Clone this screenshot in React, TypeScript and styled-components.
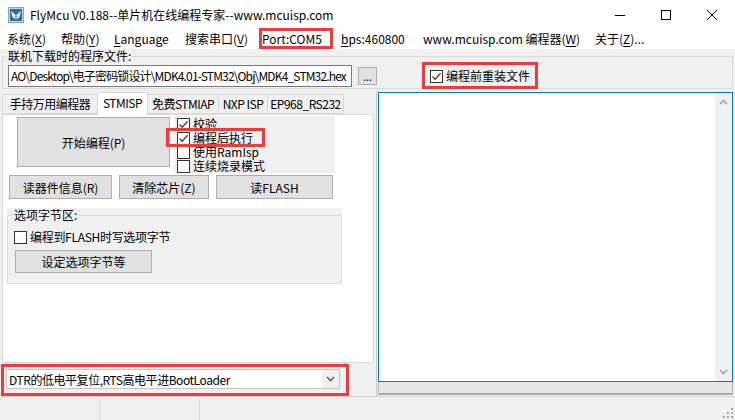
import React from 'react';
import styled, { createGlobalStyle } from 'styled-components';

const FONT = `"Noto Sans CJK SC", "Noto Sans", sans-serif`;

const Global = createGlobalStyle`
  html, body { margin: 0; padding: 0; background: #f0f0f0; }
  body { font-family: ${FONT}; font-size: 12px; color: #000; }
  #root { width: 735px; height: 420px; overflow: hidden; }
  * { box-sizing: border-box; }
`;

const Window = styled.div`
  position: relative;
  width: 735px;
  height: 420px;
  display: flex;
  flex-direction: column;
  background: #f0f0f0;
  font-family: ${FONT};
  font-size: 12px;
  overflow: hidden;
`;

const TitleBar = styled.div`
  height: 29px;
  flex: none;
  background: #fff;
  display: flex;
  align-items: center;
`;
const AppIcon = styled.svg`
  margin-left: 8px;
  flex: none;
`;
const TitleText = styled.span`
  margin-left: 6px;
  white-space: nowrap;
`;
const WinButtons = styled.div`
  margin-left: auto;
  display: flex;
  height: 100%;
`;
const WinButton = styled.div`
  width: 46px;
  display: flex;
  align-items: center;
  justify-content: center;
`;

const MenuBar = styled.div`
  height: 20px;
  flex: none;
  background: #fff;
  display: flex;
  align-items: center;
  white-space: nowrap;
`;
const MenuItem = styled.span<{ $w: number }>`
  width: ${p => p.$w}px;
  padding-left: 7px;
  line-height: 20px;
  flex: none;
`;
const Acc = styled.span`
  text-decoration: underline;
  text-underline-offset: 2px;
`;

const FileGroup = styled.fieldset`
  margin: 0 2px 2px 2px;
  padding: 2px 0 1px 5px;
  border: 1px solid #dcdcdc;
  flex: none;
  min-width: 0;
`;
const GroupLegend = styled.legend`
  padding: 0 1px;
  margin-left: -1px;
  line-height: 14px;
  font-size: 12px;
`;
const FileRow = styled.div`
  display: flex;
  align-items: center;
`;
const PathInput = styled.div`
  width: 344px;
  height: 22px;
  background: #fff;
  border: 1px solid #7a7a7a;
  padding-left: 2px;
  line-height: 20px;
  white-space: nowrap;
  overflow: hidden;
  letter-spacing: -0.85px;
`;
const SmallButton = styled.div`
  width: 19px;
  height: 18px;
  margin-left: 6px;
  background: #e1e1e1;
  border: 1px solid #adadad;
  display: flex;
  align-items: center;
  justify-content: center;
  line-height: 12px;
  font-size: 11px;
`;

const CheckRow = styled.label<{ $ml?: number; $h?: number }>`
  display: flex;
  align-items: center;
  margin-left: ${p => p.$ml ?? 0}px;
  height: ${p => p.$h ?? 14}px;
  white-space: nowrap;
  line-height: 14px;
`;
const Box = styled.span`
  width: 13px;
  height: 13px;
  flex: none;
  border: 1px solid #333;
  background: #fff;
  margin-right: 3px;
  display: flex;
  align-items: center;
  justify-content: center;
`;

const Main = styled.div`
  flex: 1;
  display: flex;
  min-height: 0;
`;
const LeftCol = styled.div`
  width: 376px;
  flex: none;
  display: flex;
  flex-direction: column;
  padding: 1px 0 0 2px;
`;
const TabStrip = styled.div`
  height: 22px;
  display: flex;
  align-items: flex-end;
  padding-left: 1px;
  position: relative;
  z-index: 1;
`;
const Tab = styled.div<{ $w: number; $active?: boolean }>`
  width: ${p => p.$w}px;
  height: ${p => (p.$active ? 23 : 20)}px;
  margin-bottom: ${p => (p.$active ? -1 : 0)}px;
  background: ${p => (p.$active ? '#fff' : '#f0f0f0')};
  border: 1px solid #d9d9d9;
  border-bottom: ${p => (p.$active ? 'none' : '1px solid #d9d9d9')};
  margin-left: -1px;
  display: flex;
  align-items: ${p => (p.$active ? 'flex-start' : 'center')};
  padding-top: ${p => (p.$active ? 2 : 0)}px;
  justify-content: center;
  white-space: nowrap;
  line-height: 16px;
  letter-spacing: -0.5px;
`;
const TabPanel = styled.div`
  width: 372px;
  height: 249px;
  background: #fff;
  border: 1px solid #d9d9d9;
  padding: 0 0 0 3px;
  display: flex;
  flex-direction: column;
`;
const TopRow = styled.div`
  display: flex;
  align-items: flex-start;
  margin-top: 1px;
  padding-left: 11px;
`;
const Button = styled.div<{ $w: number; $h: number }>`
  width: ${p => p.$w}px;
  height: ${p => p.$h}px;
  flex: none;
  background: #e1e1e1;
  border: 1px solid #adadad;
  display: flex;
  align-items: center;
  justify-content: center;
  white-space: nowrap;
`;
const BigButton = styled(Button)`
  margin-top: 1px;
`;
const CheckGroup = styled.div`
  margin-left: 4px;
  width: 161px;
  height: 57px;
  background: #f0f0f0;
  padding: 1px 0 0 3px;
  display: flex;
  flex-direction: column;
`;
const ButtonRow = styled.div`
  display: flex;
  gap: 7px;
  margin-top: 2px;
  padding-left: 3px;
`;
const OptionArea = styled.div`
  margin: 9px 0 0 1px;
  width: 335px;
  background: #f0f0f0;
`;
const OptionGroup = styled.fieldset`
  margin: 0;
  padding: 0 0 10px 6px;
  border: 1px solid #dcdcdc;
  min-width: 0;
`;
const OptionCheck = styled(CheckRow)`
  margin-top: 8px;
  letter-spacing: -0.3px;
`;
const OptionButton = styled(Button)`
  margin: 6px 0 0 1px;
`;

const Combo = styled.div`
  margin: 6px 0 0 4px;
  width: 334px;
  height: 20px;
  background: #fff;
  border: 1px solid #c4c4c4;
  display: flex;
  align-items: center;
`;
const ComboText = styled.span`
  flex: 1;
  padding-left: 2px;
  white-space: nowrap;
  overflow: hidden;
  letter-spacing: -0.45px;
`;
const ComboArrow = styled.span`
  width: 17px;
  height: 100%;
  background: #f0f0f0;
  display: flex;
  align-items: center;
  justify-content: center;
`;

const RightCol = styled.div`
  flex: 1;
  display: flex;
  flex-direction: column;
  border-left: 1px solid #c8c8c8;
  padding: 1px 2px 0 1px;
`;
const TextArea = styled.div`
  height: 290px;
  background: #fff;
  border: 1px solid #0078d7;
  display: flex;
`;
const TextContent = styled.div`
  flex: 1;
`;
const VScroll = styled.div`
  width: 17px;
  background: #f0f0f0;
  display: flex;
  flex-direction: column;
  justify-content: space-between;
  align-items: center;
  padding: 6px 0 6px 0;
`;
const HBar = styled.div`
  height: 13px;
  background: #e6e6e6;
  border-left: 1px solid #b4b4b4;
  border-right: 1px solid #b4b4b4;
  border-bottom: 2px solid #a8a8a8;
`;

const StatusBar = styled.div`
  height: 24px;
  flex: none;
  display: flex;
  border-top: 1px solid #d0d0d0;
  padding-top: 2px;
`;
const StatusCell = styled.div`
  width: 100px;
  border-right: 1px solid #d8d8d8;
`;
const Grip = styled.svg`
  margin: auto 2px 2px auto;
`;

const Highlight = styled.div<{ $x: number; $y: number; $w: number; $h: number }>`
  position: absolute;
  left: ${p => p.$x}px;
  top: ${p => p.$y}px;
  width: ${p => p.$w}px;
  height: ${p => p.$h}px;
  border: 3px solid #ef3b3b;
  pointer-events: none;
`;

const Check = ({ checked }: { checked?: boolean }) => (
  <Box>
    {checked && (
      <svg width="11" height="11" viewBox="0 0 11 11">
        <path d="M1.5 5.5 L4.2 8.2 L9.6 2.2" fill="none" stroke="#444" strokeWidth="1.3" />
      </svg>
    )}
  </Box>
);

const Chevron = ({ up, color = '#a6a6a6', w = 9 }: { up?: boolean; color?: string; w?: number }) => (
  <svg width={w} height="6" viewBox="0 0 9 6">
    <path d={up ? 'M1 5 L4.5 1.5 L8 5' : 'M1 1 L4.5 4.5 L8 1'} fill="none" stroke={color} strokeWidth="1.6" />
  </svg>
);

export default function App() {
  return (
    <Window>
      <Global />
      <TitleBar>
        <AppIcon width="16" height="16" viewBox="0 0 16 16">
          <rect x="0.5" y="0.5" width="15" height="15" fill="#c9d6e3" stroke="#8ea3b8" />
          <rect x="2" y="2" width="12" height="12" fill="#2a6db5" />
          <path d="M3 4 L8 8.5 L13 4 L11.5 10 L8 12.5 L4.5 10 Z" fill="#fff" />
          <path d="M8 8.5 L8 12" stroke="#2a6db5" strokeWidth="1" />
        </AppIcon>
        <TitleText>FlyMcu V0.188--单片机在线编程专家--www.mcuisp.com</TitleText>
        <WinButtons>
          <WinButton>
            <svg width="10" height="10" viewBox="0 0 10 10"><path d="M0 5.5 H10" stroke="#000" strokeWidth="1" /></svg>
          </WinButton>
          <WinButton>
            <svg width="10" height="10" viewBox="0 0 10 10"><rect x="0.5" y="0.5" width="9" height="9" fill="none" stroke="#000" /></svg>
          </WinButton>
          <WinButton>
            <svg width="10" height="10" viewBox="0 0 10 10"><path d="M0 0 L10 10 M10 0 L0 10" stroke="#000" strokeWidth="1" /></svg>
          </WinButton>
        </WinButtons>
      </TitleBar>

      <MenuBar>
        <MenuItem $w={54}>系统(<Acc>X</Acc>)</MenuItem>
        <MenuItem $w={53}>帮助(<Acc>Y</Acc>)</MenuItem>
        <MenuItem $w={71}><Acc>L</Acc>anguage</MenuItem>
        <MenuItem $w={77}>搜索串口(<Acc>V</Acc>)</MenuItem>
        <MenuItem $w={79}><Acc>P</Acc>ort:COM5</MenuItem>
        <MenuItem $w={82}><Acc>b</Acc>ps:460800</MenuItem>
        <MenuItem $w={172}>www.mcuisp.com 编程器(<Acc>W</Acc>)</MenuItem>
        <MenuItem $w={80}>关于(<Acc>Z</Acc>)...</MenuItem>
      </MenuBar>

      <FileGroup>
        <GroupLegend>联机下载时的程序文件:</GroupLegend>
        <FileRow>
          <PathInput>AO\Desktop\电子密码锁设计\MDK4.01-STM32\Obj\MDK4_STM32.hex</PathInput>
          <SmallButton>...</SmallButton>
          <CheckRow $ml={53} $h={16}>
            <Check checked />
            编程前重装文件
          </CheckRow>
        </FileRow>
      </FileGroup>

      <Main>
        <LeftCol>
          <TabStrip>
            <Tab $w={96}>手持万用编程器</Tab>
            <Tab $w={51} $active>STMISP</Tab>
            <Tab $w={72}>免费STMIAP</Tab>
            <Tab $w={50}>NXP ISP</Tab>
            <Tab $w={77}>EP968_RS232</Tab>
          </TabStrip>
          <TabPanel>
            <TopRow>
              <BigButton $w={153} $h={50}>开始编程(P)</BigButton>
              <CheckGroup>
                <CheckRow><Check checked />校验</CheckRow>
                <CheckRow><Check checked />编程后执行</CheckRow>
                <CheckRow><Check />使用RamIsp</CheckRow>
                <CheckRow><Check />连续烧录模式</CheckRow>
              </CheckGroup>
            </TopRow>
            <ButtonRow>
              <Button $w={103} $h={24}>读器件信息(R)</Button>
              <Button $w={90} $h={24}>清除芯片(Z)</Button>
              <Button $w={117} $h={24}>读FLASH</Button>
            </ButtonRow>
            <OptionArea>
              <OptionGroup>
                <GroupLegend>选项字节区:</GroupLegend>
                <OptionCheck><Check />编程到FLASH时写选项字节</OptionCheck>
                <OptionButton $w={137} $h={23}>设定选项字节等</OptionButton>
              </OptionGroup>
            </OptionArea>
          </TabPanel>
          <Combo>
            <ComboText>DTR的低电平复位,RTS高电平进BootLoader</ComboText>
            <ComboArrow><Chevron color="#606060" w={9} /></ComboArrow>
          </Combo>
        </LeftCol>
        <RightCol>
          <TextArea>
            <TextContent />
            <VScroll>
              <Chevron up />
              <Chevron />
            </VScroll>
          </TextArea>
          <HBar />
        </RightCol>
      </Main>

      <StatusBar>
        <StatusCell />
        <StatusCell />
        <Grip width="10" height="10" viewBox="0 0 10 10">
          <g fill="#a8a8a8">
            <rect x="8" y="0" width="2" height="2" />
            <rect x="4" y="4" width="2" height="2" />
            <rect x="8" y="4" width="2" height="2" />
            <rect x="0" y="8" width="2" height="2" />
            <rect x="4" y="8" width="2" height="2" />
            <rect x="8" y="8" width="2" height="2" />
          </g>
        </Grip>
      </StatusBar>

      <Highlight $x={259} $y={28} $w={74} $h={21} />
      <Highlight $x={422} $y={62} $w={116} $h={27} />
      <Highlight $x={166} $y={128} $w={99} $h={19} />
      <Highlight $x={1} $y={364} $w={348} $h={32} />
    </Window>
  );
}
